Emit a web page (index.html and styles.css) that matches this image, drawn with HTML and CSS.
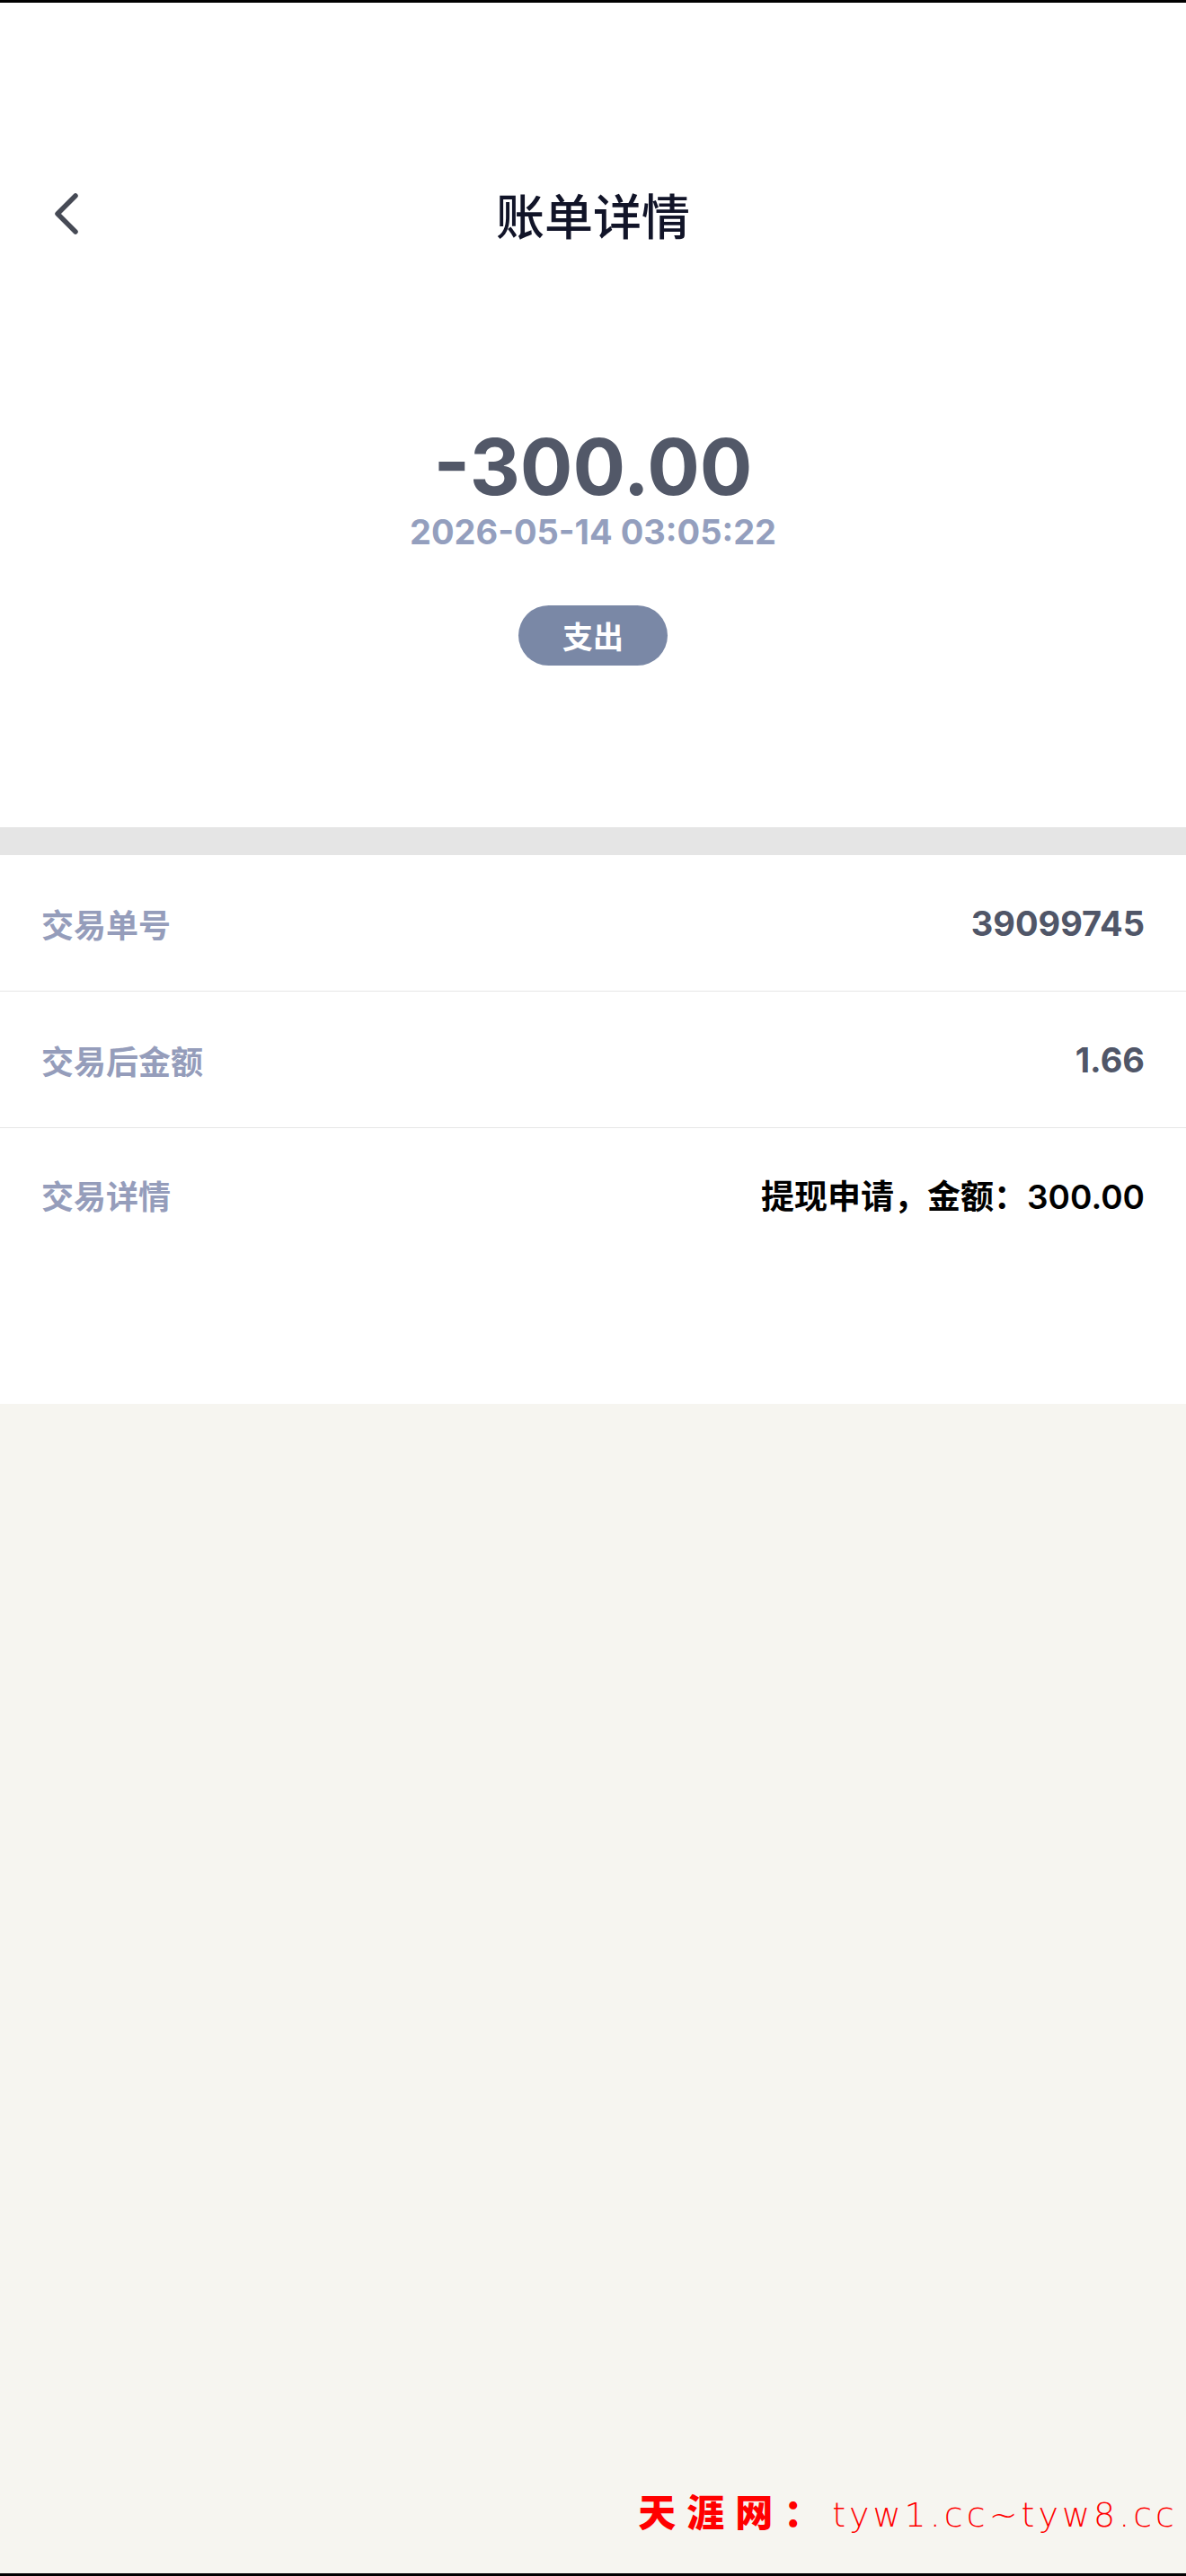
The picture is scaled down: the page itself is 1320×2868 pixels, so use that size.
FILE: index.html
```html
<!DOCTYPE html>
<html lang="zh-CN">
<head>
    <meta charset="UTF-8">
    <meta name="viewport" content="width=device-width, initial-scale=1.0">
    <title>账单详情</title>
    <link rel="stylesheet" href="styles.css">
</head>
<body>
    <div class="page">
        <div class="top">
            <!-- 导航栏 -->
            <div class="nav">
                <span class="back-btn">
                    <svg width="30" height="48" viewBox="0 0 30 48">
                        <path d="M26 4 L6 24 L26 44" fill="none" stroke="#464a55" stroke-width="5.5" stroke-linecap="round" stroke-linejoin="round"/>
                    </svg>
                </span>
                <h1 class="nav-title">账单详情</h1>
                <span></span>
            </div>

            <!-- 金额 -->
            <div class="summary">
                <div class="amount">-300.00</div>
                <div class="time">2026-05-14 03:05:22</div>
                <span class="tag">支出</span>
            </div>
        </div>

        <div class="gap"></div>

        <!-- 明细 -->
        <div class="detail">
            <div class="row">
                <span class="label">交易单号</span>
                <span class="value">39099745</span>
            </div>
            <div class="row">
                <span class="label">交易后金额</span>
                <span class="value">1.66</span>
            </div>
            <div class="row">
                <span class="label">交易详情</span>
                <span class="value value-dark">提现申请，金额：300.00</span>
            </div>
        </div>

        <div class="footer">
            <span class="mark-cn">天涯网：</span><span class="mark-en">tyw1.cc~tyw8.cc</span>
        </div>
    </div>
</body>
</html>
```

FILE: styles.css
```css
/* 기본 스타일 */
* {
    box-sizing: border-box;
}

body {
    margin: 0;
    font-family: Inter, "Noto Sans CJK SC", sans-serif;
    background-color: #f6f5f0;
}

.page {
    min-height: 2868px;
    display: flex;
    flex-direction: column;
    border-top: 3px solid #000;
    border-bottom: 3px solid #000;
}

.top {
    background-color: #fff;
}

/* 导航栏 */
.nav {
    margin-top: 180px;
    height: 110px;
    padding: 0 58px;
    display: grid;
    grid-template-columns: 1fr auto 1fr;
    align-items: center;
}

.back-btn {
    display: flex;
    align-items: center;
    cursor: pointer;
}

.nav-title {
    margin: 0;
    font-family: "Noto Sans CJK SC", sans-serif;
    font-size: 54px;
    font-weight: 500;
    color: #111428;
}

/* 金额 */
.summary {
    padding: 177px 0 180px;
    display: flex;
    flex-direction: column;
    align-items: center;
}

.amount {
    font-size: 87px;
    line-height: 100px;
    font-weight: 700;
    color: #525868;
}

.time {
    font-size: 38px;
    line-height: 44px;
    font-weight: 700;
    color: #949fbe;
}

.tag {
    margin-top: 60px;
    width: 166px;
    height: 67px;
    border-radius: 34px;
    background-color: #7a88a6;
    color: #fff;
    font-family: "Noto Sans CJK SC", sans-serif;
    font-size: 34px;
    font-weight: 700;
    display: flex;
    align-items: center;
    justify-content: center;
}

.gap {
    height: 31px;
    background-color: #e5e5e5;
}

/* 明细 */
.detail {
    background-color: #fff;
    padding-bottom: 155px;
}

.row {
    height: 152px;
    padding: 0 46px;
    display: flex;
    align-items: center;
    justify-content: space-between;
    border-bottom: 1px solid #e6e6e6;
}

.row:last-child {
    border-bottom: none;
    padding-bottom: 4px;
}

.label {
    font-family: "Noto Sans CJK SC", sans-serif;
    font-size: 36px;
    font-weight: 700;
    color: #959dbb;
}

.value {
    font-size: 38px;
    font-weight: 700;
    color: #505668;
}

.value-dark {
    font-size: 37px;
    font-weight: 600;
    color: #000;
}

/* 水印 */
.footer {
    margin-top: auto;
    padding: 0 9px 36px 0;
    text-align: right;
    color: #ff0000;
    line-height: 44px;
}

.mark-cn {
    font-family: "Noto Sans CJK SC", serif;
    font-size: 42px;
    font-weight: 900;
    letter-spacing: 12px;
}

.mark-en {
    font-family: "DejaVu Sans", sans-serif;
    font-size: 38px;
    font-weight: 300;
    letter-spacing: 4px;
}
```
